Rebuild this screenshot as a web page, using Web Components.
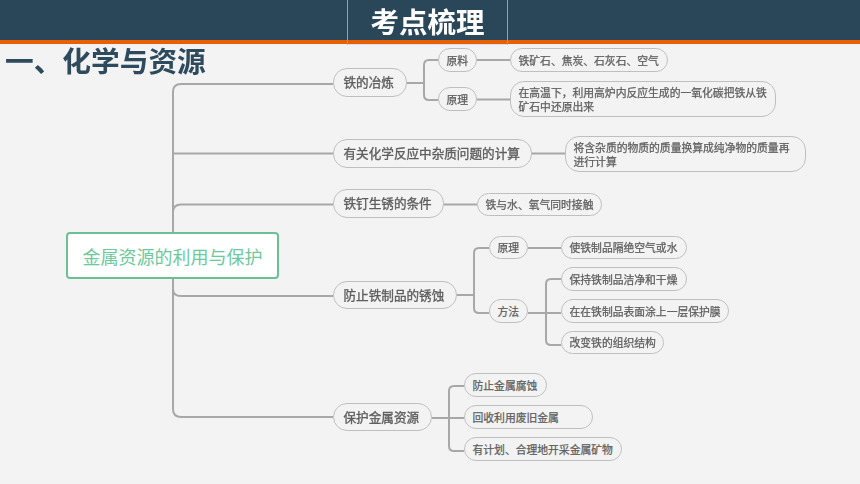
<!DOCTYPE html>
<html lang="zh">
<head>
<meta charset="utf-8">
<title>考点梳理</title>
<style>
    html, body { margin: 0; padding: 0; background: #f3f3f3; }
</style>
</head>
<body>
<study-slide>
    <slide-header slot="header">考点梳理</slide-header>
    <section-title slot="title">一、化学与资源</section-title>
    <mind-map slot="map">
        <mind-root x="66" y="232" w="213" h="47">金属资源的利用与保护</mind-root>

        <mind-node level="1" x="333" y="68" w="74" h="29">铁的冶炼</mind-node>
        <mind-node x="438" y="48" w="39" h="24">原料</mind-node>
        <mind-node x="510" y="48" w="158" h="24">铁矿石、焦炭、石灰石、空气</mind-node>
        <mind-node x="438" y="87" w="39" h="24">原理</mind-node>
        <mind-node x="510" y="81" w="266" h="36">在高温下，利用高炉内反应生成的一氧化碳把铁从铁<br>矿石中还原出来</mind-node>

        <mind-node level="1" x="333" y="139" w="199" h="29">有关化学反应中杂质问题的计算</mind-node>
        <mind-node x="565" y="136" w="241" h="36">将含杂质的物质的质量换算成纯净物的质量再<br>进行计算</mind-node>

        <mind-node level="1" x="333" y="189" w="111" h="29">铁钉生锈的条件</mind-node>
        <mind-node x="477" y="193" w="125" h="23">铁与水、氧气同时接触</mind-node>

        <mind-node level="1" x="333" y="281" w="124" h="28">防止铁制品的锈蚀</mind-node>
        <mind-node x="489" y="236" w="39" h="23">原理</mind-node>
        <mind-node x="561" y="236" w="126" h="23">使铁制品隔绝空气或水</mind-node>
        <mind-node x="489" y="299" w="39" h="24">方法</mind-node>
        <mind-node x="561" y="267" w="126" h="24">保持铁制品洁净和干燥</mind-node>
        <mind-node x="561" y="299" w="168" h="24">在在铁制品表面涂上一层保护膜</mind-node>
        <mind-node x="561" y="331" w="103" h="23">改变铁的组织结构</mind-node>

        <mind-node level="1" x="333" y="403" w="99" h="28">保护金属资源</mind-node>
        <mind-node x="464" y="373" w="83" h="24">防止金属腐蚀</mind-node>
        <mind-node x="464" y="405" w="129" h="24">回收利用废旧金属</mind-node>
        <mind-node x="464" y="437" w="158" h="24">有计划、合理地开采金属矿物</mind-node>
    </mind-map>
</study-slide>

<script>
const CJK_FONT = '"Noto Sans CJK SC", "Liberation Sans", sans-serif';

class StudySlide extends HTMLElement {
    constructor() {
        super();
        this.attachShadow({ mode: 'open' });
        this.shadowRoot.innerHTML = `
            <style>
                :host {
                    display: block;
                    position: relative;
                    width: 860px;
                    height: 484px;
                    overflow: hidden;
                    background: #f3f3f3;
                    font-family: ${CJK_FONT};
                }
            </style>
            <slot name="header"></slot>
            <slot name="title"></slot>
            <slot name="map"></slot>
        `;
    }
}

class SlideHeader extends HTMLElement {
    constructor() {
        super();
        this.attachShadow({ mode: 'open' });
        this.shadowRoot.innerHTML = `
            <style>
                :host {
                    display: flex;
                    justify-content: center;
                    height: 40px;
                    padding-right: 5px;
                    background: #2a475a;
                    border-bottom: 4px solid #e85f05;
                }
                .label {
                    position: relative;
                    z-index: 1;
                    box-sizing: border-box;
                    width: 161px;
                    height: 45px;
                    border: 1px solid #8ea2b0;
                    border-top: 0;
                    border-bottom-color: #d9e2e8;
                    background: linear-gradient(#2a475a 0 40px, #e85f05 40px 44px, #f3f3f3 44px);
                    color: #fff;
                    font-size: 28.5px;
                    font-weight: 700;
                    line-height: 41px;
                    text-align: center;
                    filter: blur(0.3px);
                }
            </style>
            <div class="label"><slot></slot></div>
        `;
    }
}

class SectionTitle extends HTMLElement {
    constructor() {
        super();
        this.attachShadow({ mode: 'open' });
        this.shadowRoot.innerHTML = `
            <style>
                :host {
                    display: block;
                    position: relative;
                    z-index: 1;
                    margin-top: -3px;
                    padding-left: 5px;
                    color: #2e4b5e;
                    font-size: 28.7px;
                    font-weight: 700;
                    line-height: 38px;
                    white-space: nowrap;
                    filter: blur(0.3px);
                }
            </style>
            <slot></slot>
        `;
    }
}

// connector paths, in page pixels
const MAP_LINKS = [
    'M333 84H181Q173 84 173 92V409Q173 417 181 417H333',
    'M173 212Q173 204.500 181 204.500H333',
    'M173 153.500H333',
    'M173 289Q173 296 181 296H333',
    'M407 83H424',
    'M438 60H429Q424 60 424 65V95Q424 100 429 100H438',
    'M477 60H510',
    'M477 99.500H510',
    'M532 153.500H565',
    'M444 204.500H477',
    'M457 295H474',
    'M489 248H479Q474 248 474 253V308Q474 313 479 313H489',
    'M528 248H561',
    'M528 313H561',
    'M561 279H551Q546 279 546 284V340Q546 345 551 345H561',
    'M432 418H464',
    'M464 386H454Q449 386 449 391V446Q449 451 454 451H464'
];

class MindMap extends HTMLElement {
    constructor() {
        super();
        this.attachShadow({ mode: 'open' });
        const paths = MAP_LINKS.map(d => `<path d="${d}"/>`).join('');
        this.shadowRoot.innerHTML = `
            <style>
                :host {
                    display: block;
                    position: absolute;
                    inset: 0;
                    filter: blur(0.5px);
                }
                svg {
                    position: absolute;
                    left: 0;
                    top: 0;
                    fill: none;
                    stroke: #a8a8a8;
                    stroke-width: 2;
                }
            </style>
            <svg width="860" height="484" viewBox="0 0 860 484">${paths}</svg>
            <slot></slot>
        `;
    }
}

// shared by both node kinds: x/y/w/h attributes are the node's place on the map
class MapBox extends HTMLElement {
    connectedCallback() {
        this.style.left = this.getAttribute('x') + 'px';
        this.style.top = this.getAttribute('y') + 'px';
        this.style.width = this.getAttribute('w') + 'px';
        this.style.height = this.getAttribute('h') + 'px';
    }
}

class MindNode extends MapBox {
    constructor() {
        super();
        this.attachShadow({ mode: 'open' });
        this.shadowRoot.innerHTML = `
            <style>
                :host {
                    display: flex;
                    align-items: center;
                    position: absolute;
                    box-sizing: border-box;
                    padding-left: 7.500px;
                    border: 1.500px solid #bfbfbf;
                    border-radius: 14px;
                    background: #f3f3f3;
                    color: #5e5e5e;
                    font-size: 10.8px;
                    line-height: 14px;
                    white-space: nowrap;
                    -webkit-text-stroke: 0.25px #5e5e5e;
                }
                :host([level="1"]) {
                    padding-left: 9.500px;
                    font-size: 12.6px;
                    -webkit-text-stroke: 0.35px #5e5e5e;
                }
                div { margin-top: -1px; }
            </style>
            <div><slot></slot></div>
        `;
    }
}

class MindRoot extends MapBox {
    constructor() {
        super();
        this.attachShadow({ mode: 'open' });
        this.shadowRoot.innerHTML = `
            <style>
                :host {
                    display: flex;
                    align-items: center;
                    justify-content: center;
                    position: absolute;
                    box-sizing: border-box;
                    border: 2px solid #6cc095;
                    border-radius: 4px;
                    background: #fff;
                    color: #6cc99b;
                    font-size: 18px;
                    white-space: nowrap;
                }
            </style>
            <slot></slot>
        `;
    }
}

customElements.define('study-slide', StudySlide);
customElements.define('slide-header', SlideHeader);
customElements.define('section-title', SectionTitle);
customElements.define('mind-map', MindMap);
customElements.define('mind-node', MindNode);
customElements.define('mind-root', MindRoot);
</script>
</body>
</html>
